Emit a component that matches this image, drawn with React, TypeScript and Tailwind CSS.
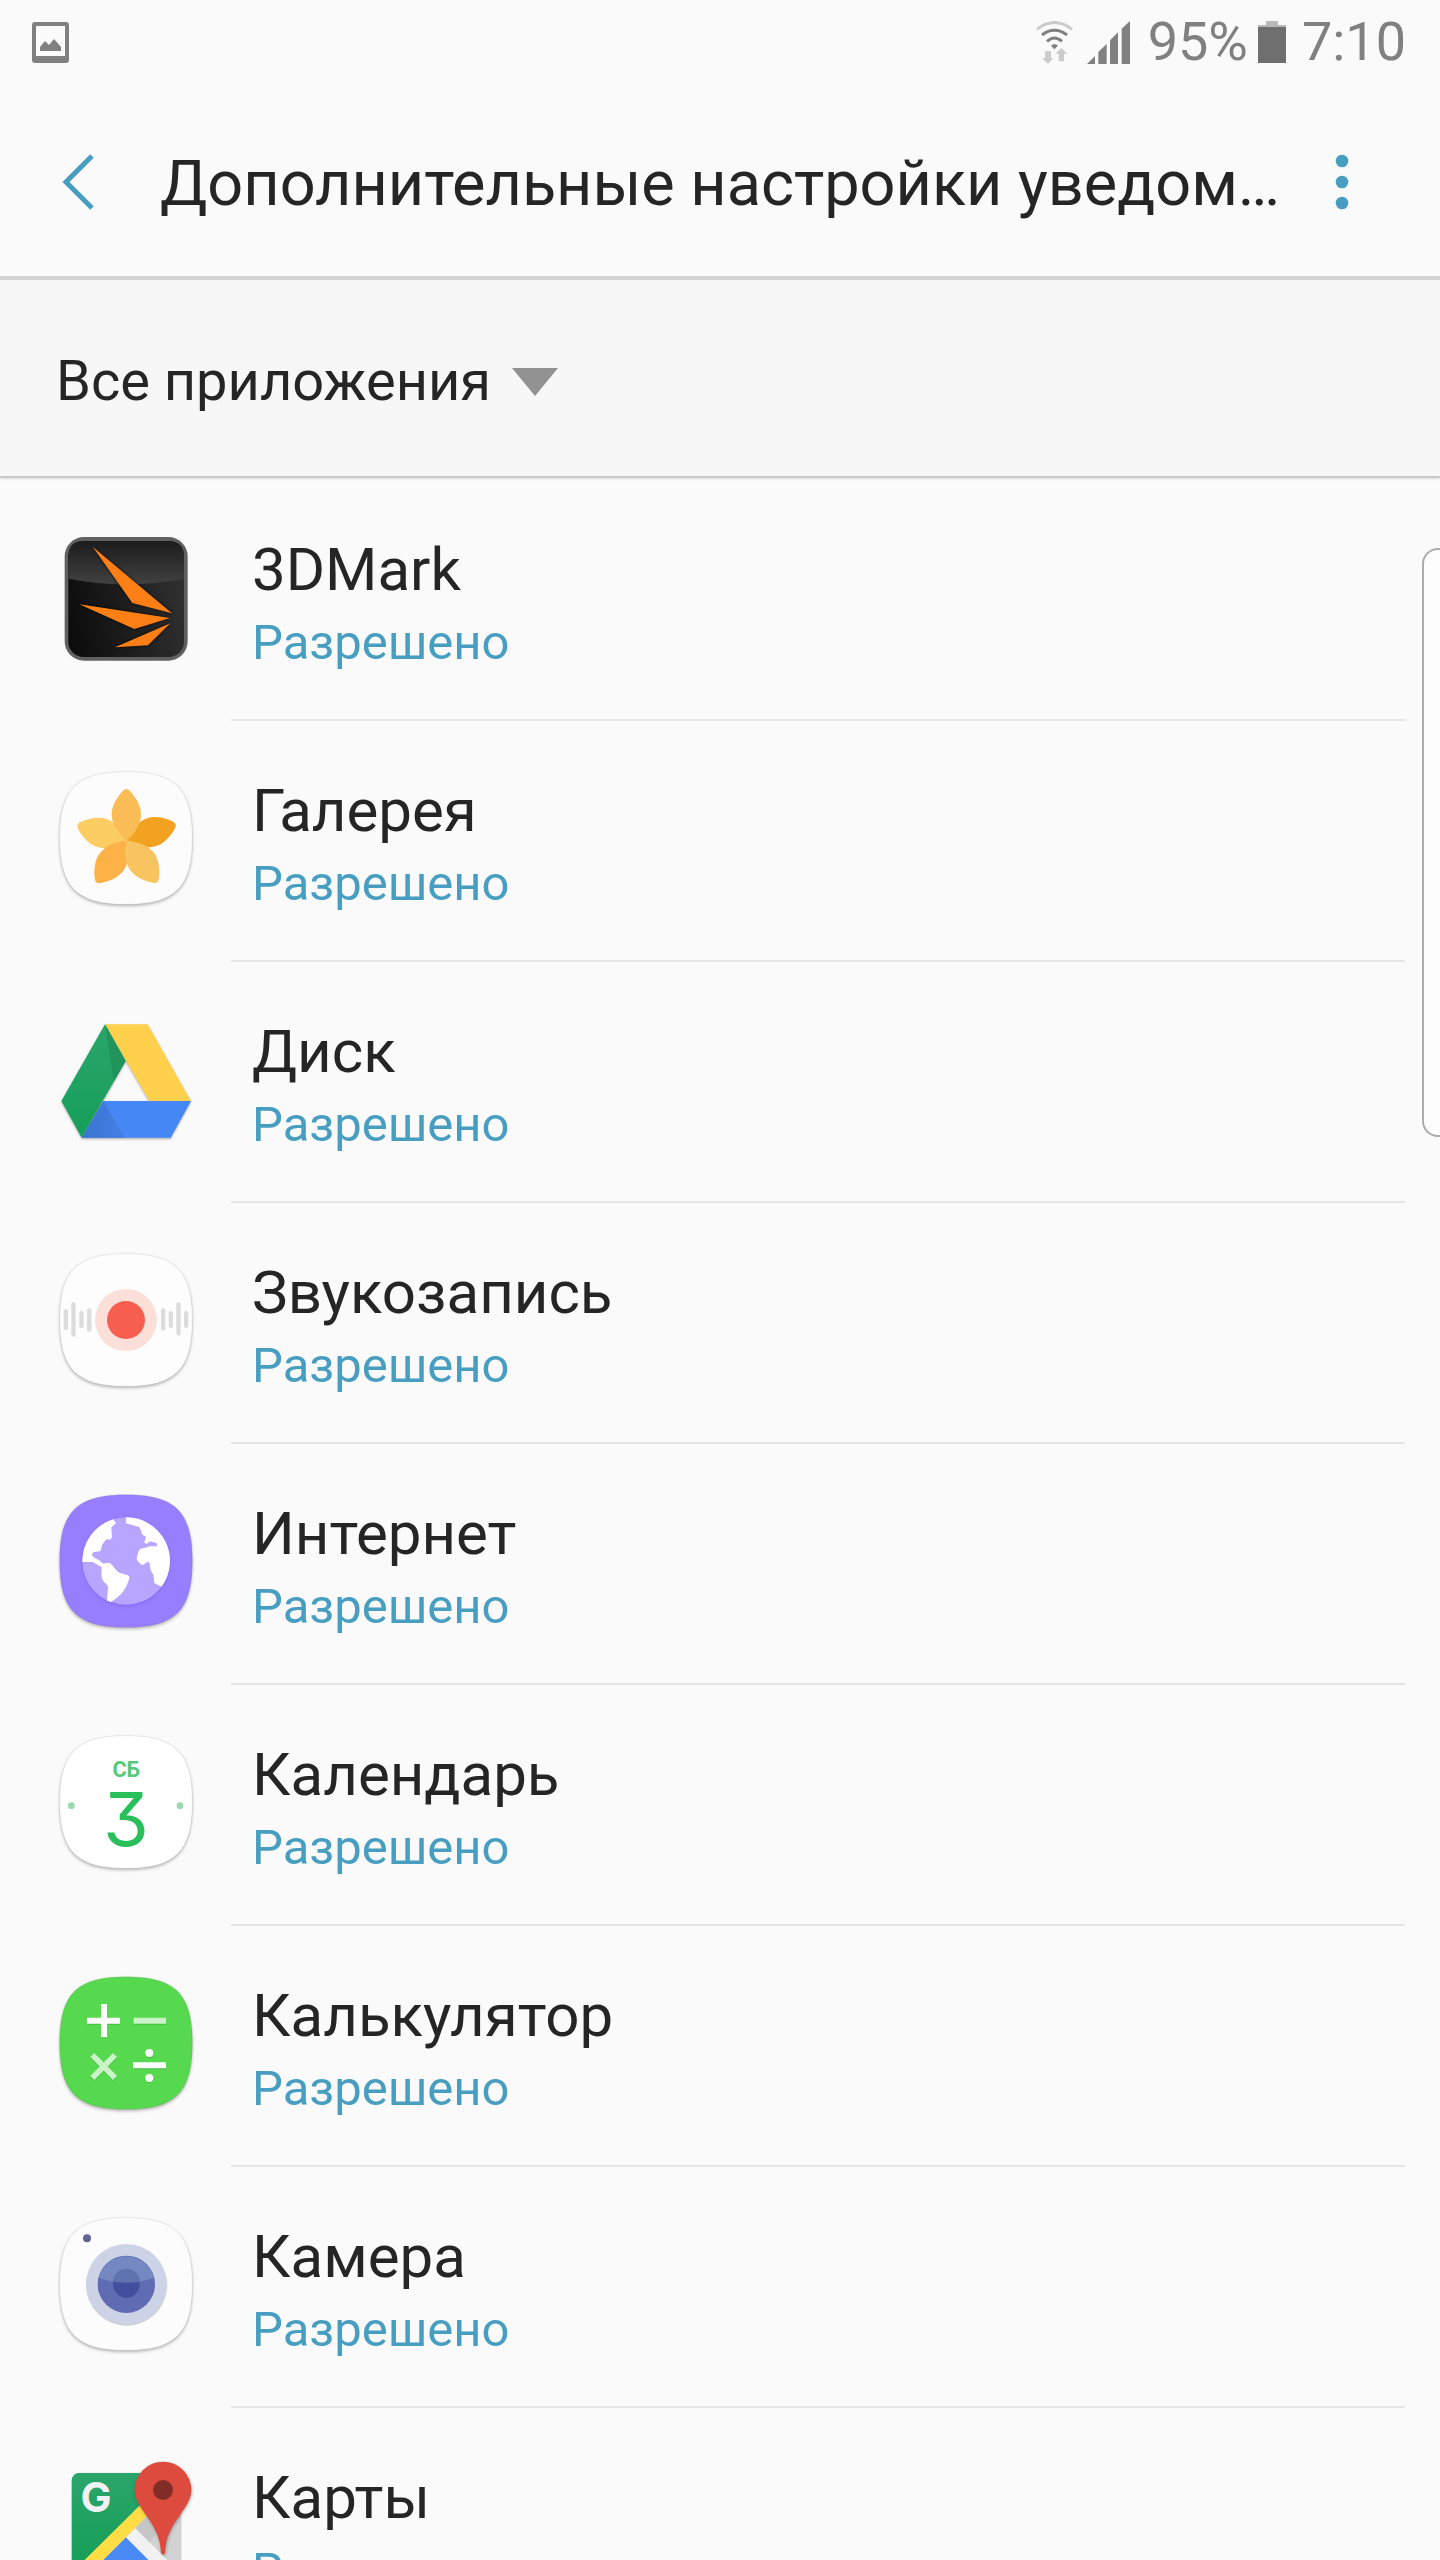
import type { ReactNode } from "react";

// Samsung-style rounded icon plate, centred on 0,0
const PLATE =
  "M-199 0C-199 -148 -148 -199 0 -199S199 -148 199 0S148 199 0 199S-199 148 -199 0Z";

function Plate({ y, fill, children }: { y: number; fill: string; children: ReactNode }) {
  return (
    <>
      <path
        d={PLATE}
        transform={`translate(258 ${y})`}
        fill={fill}
        stroke="#000"
        strokeOpacity="0.1"
        strokeWidth="2"
        className="[filter:drop-shadow(0_5px_4px_rgba(0,0,0,0.28))]"
      />
      {children}
    </>
  );
}

function AppIcon({ top, children }: { top: number; children: ReactNode }) {
  return (
    <svg
      viewBox={`0 ${top} 510 510`}
      className="size-[170px] shrink-0"
      aria-hidden="true"
    >
      {children}
    </svg>
  );
}

function BenchmarkIcon() {
  return (
    <AppIcon top={-18}>
      <defs>
        <linearGradient id="bm-base" x1="0" x2="1" y1="0.6" y2="0.4">
          <stop offset="0" stopColor="#0d0d0d" />
          <stop offset="1" stopColor="#303030" />
        </linearGradient>
        <linearGradient id="bm-gloss" x1="0" x2="0" y1="0" y2="1">
          <stop offset="0" stopColor="#1c1c1c" />
          <stop offset="1" stopColor="#414141" />
        </linearGradient>
      </defs>
      <rect x="74" y="51" width="369" height="371" rx="58" fill="#606060" />
      <rect x="85" y="63" width="347" height="348" rx="46" fill="url(#bm-base)" />
      <path
        d="M85 176V109Q85 63 131 63H386Q432 63 432 109V176Q258 210 85 176Z"
        fill="url(#bm-gloss)"
      />
      <g
        fill="#ff7f17"
        className="[filter:drop-shadow(0_0_4px_rgba(0,0,0,0.9))]"
      >
        <path d="M158 80L396 280L277 249Z" />
        <path d="M118 253L390 294L283 327Z" />
        <path d="M391 310L324 376L225 382Z" />
      </g>
    </AppIcon>
  );
}

function GalleryIcon() {
  const petals = [
    { angle: 72, color: "#f2a120" },
    { angle: 288, color: "#fccd62" },
    { angle: 0, color: "#fabc55" },
    { angle: 216, color: "#fcb246" },
    { angle: 144, color: "#f8c460" },
  ];
  return (
    <AppIcon top={15}>
      <Plate y={264} fill="#fcfcfc">
        {petals.map((p) => (
          <path
            key={p.angle}
            d="M260 272C230 246 215 220 215 192C215 160 243 126 253 119Q259 115 265 119C275 126 303 160 303 192C303 220 290 246 260 272Z"
            transform={`rotate(${p.angle} 260 272)`}
            fill={p.color}
          />
        ))}
      </Plate>
    </AppIcon>
  );
}

function DriveIcon() {
  return (
    <AppIcon top={-12}>
      <defs>
        <linearGradient id="dr-green" x1="0" x2="0" y1="0" y2="1">
          <stop offset="0" stopColor="#2ba56b" />
          <stop offset="1" stopColor="#159f5a" />
        </linearGradient>
        <linearGradient id="dr-blue" x1="0" x2="1" y1="0" y2="0">
          <stop offset="0" stopColor="#3b74d0" />
          <stop offset="1" stopColor="#4480e4" />
        </linearGradient>
      </defs>
      <g className="[filter:drop-shadow(0_4px_3px_rgba(0,0,0,0.3))]">
        <path d="M195 73H323L453 303H328Z" fill="#ffd04c" />
        <path d="M190 303H453L392 413H125Z" fill="#4587f4" />
        <path d="M195 73L257 183L125 413L64 303Z" fill="url(#dr-green)" />
      </g>
      <path d="M195 73L257 183L222 244Z" fill="#1f8f57" opacity="0.7" />
      <path d="M190 303L255 413H125Z" fill="url(#dr-blue)" />
    </AppIcon>
  );
}

function RecorderIcon() {
  const bars = [
    [71, 208, 62],
    [94, 187, 103],
    [118, 213, 51],
    [141, 205, 70],
    [363, 205, 67],
    [386, 213, 51],
    [409, 187, 100],
    [432, 213, 51],
  ];
  return (
    <AppIcon top={-9}>
      <Plate y={240} fill="#fdfdfd">
        {bars.map(([x, y, h]) => (
          <rect key={x} x={x} y={y} width="13" height={h} rx="6" fill="#dcdcdc" />
        ))}
        <circle cx="258" cy="240" r="93" fill="#fcdfd9" />
        <circle cx="258" cy="240" r="57" fill="#f65f50" />
      </Plate>
    </AppIcon>
  );
}

function InternetIcon() {
  return (
    <AppIcon top={-6}>
      <Plate y={243} fill="#977eff">
        <circle
          cx="258"
          cy="243"
          r="131"
          fill="#b8a5ff"
          className="[filter:drop-shadow(0_4px_4px_rgba(80,50,180,0.25))]"
        />
        <path
          d="M220 118L228 130L214 142L216 172Q213 182 203 178Q197 178 194 184Q185 194 184 204L181 214L161 216L155 224L163 233L178 241Q186 252 194 250L207 248Q216 252 221 261Q232 276 240 279L264 286Q270 290 267 299Q260 320 250 334Q238 350 213 366L201 362L204 320Q203 314 192 306Q185 298 184 284L185 262L158 246H127A131 131 0 0 1 220 118Z"
          fill="#fff"
        />
        <path
          d="M258 112A131 131 0 0 1 365 320L343 309L340 284Q330 272 329 250Q324 242 317 250L307 256Q290 244 290 234L296 213Q300 204 312 204L330 199H352Q352 186 340 187L330 184L319 192L312 186Q320 174 316 168Q305 166 303 152L298 141L258 130Z"
          fill="#fff"
        />
      </Plate>
    </AppIcon>
  );
}

function CalendarIcon() {
  return (
    <AppIcon top={-3}>
      <Plate y={246} fill="#fff">
        <text
          x="259"
          y="171"
          textAnchor="middle"
          fill="#55c97c"
          className="font-[Roboto] text-[65px] font-bold"
        >
          СБ
        </text>
        <text
          x="258"
          y="377"
          textAnchor="middle"
          fill="#29bf5b"
          className="font-[Inter] text-[222px] [font-feature-settings:'cv09']"
        >
          3
        </text>
        <circle cx="94" cy="257" r="10" fill="#98dab0" />
        <circle cx="420" cy="257" r="10" fill="#98dab0" />
      </Plate>
    </AppIcon>
  );
}

function CalculatorIcon() {
  return (
    <AppIcon top={0}>
      <Plate y={249} fill="#56d84f">
        <g className="[filter:drop-shadow(0_3px_2px_rgba(0,90,0,0.2))]">
          <path d="M183 132H201V173H240V191H201V232H183V191H141V173H183Z" fill="#fff" />
          <path d="M281 173H378V191H281Z" fill="#caf3c8" />
          <path d="M157 285L225 354M225 285L157 354" stroke="#caf3c8" strokeWidth="17" />
          <path d="M279 307H378V325H279Z" fill="#fff" />
          <circle cx="328" cy="279" r="12" fill="#fff" />
          <circle cx="328" cy="354" r="12" fill="#fff" />
        </g>
      </Plate>
    </AppIcon>
  );
}

function CameraIcon() {
  return (
    <AppIcon top={3}>
      <Plate y={252} fill="#fcfcfc">
        <circle cx="141" cy="115" r="12" fill="#5f6593" />
        <circle
          cx="259"
          cy="253"
          r="121"
          fill="#cdd3e7"
          className="[filter:drop-shadow(1px_3px_2px_rgba(0,0,0,0.2))]"
        />
        <circle cx="259" cy="253" r="86" fill="#5f6cb3" />
        <path d="M176 233A86 86 0 0 1 342 233Q259 263 176 233Z" fill="#7488c1" />
        <circle cx="259" cy="253" r="40" fill="#434f9e" />
        <path d="M219 246A40 40 0 0 1 299 246Q259 250 219 246Z" fill="#5d72af" />
      </Plate>
    </AppIcon>
  );
}

function MapsIcon() {
  return (
    <AppIcon top={156}>
      <defs>
        <clipPath id="map-sheet">
          <rect x="95" y="248" width="330" height="330" rx="24" />
        </clipPath>
        <linearGradient id="map-green" x1="0" x2="0" y1="0" y2="1">
          <stop offset="0" stopColor="#2ba56b" />
          <stop offset="0.8" stopColor="#169f58" />
        </linearGradient>
      </defs>
      <g clipPath="url(#map-sheet)">
        <path d="M95 248H425V578H95Z" fill="#d2d2d2" />
        <path d="M95 248H398L68 578Z" fill="url(#map-green)" />
        <path d="M258 442L394 578H122Z" fill="#4a8af4" />
        <path d="M258 442L286 414L450 578H394Z" fill="#f1f1f1" />
        <path d="M298 348L398 248V301L121 578H65Z" fill="#ffdd45" />
        <path d="M398 301L286 414L330 458L425 300Z" fill="#c6c6c6" />
      </g>
      <text
        x="168"
        y="367"
        textAnchor="middle"
        fill="#f1f1f1"
        className="font-[Inter] text-[124px] font-bold"
      >
        G
      </text>
      <path
        d="M369 215A85 85 0 0 1 454 300C454 358 378 396 375 488Q369 500 363 488C360 396 284 358 284 300A85 85 0 0 1 369 215Z"
        fill="#dc4b3e"
        className="[filter:drop-shadow(2px_3px_4px_rgba(0,0,0,0.3))]"
      />
      <circle cx="369" cy="300" r="30" fill="#822b27" />
    </AppIcon>
  );
}

const APPS = [
  { name: "3DMark", icon: <BenchmarkIcon /> },
  { name: "Галерея", icon: <GalleryIcon /> },
  { name: "Диск", icon: <DriveIcon /> },
  { name: "Звукозапись", icon: <RecorderIcon /> },
  { name: "Интернет", icon: <InternetIcon /> },
  { name: "Календарь", icon: <CalendarIcon /> },
  { name: "Калькулятор", icon: <CalculatorIcon /> },
  { name: "Камера", icon: <CameraIcon /> },
  { name: "Карты", icon: <MapsIcon /> },
];

function StatusBar() {
  return (
    <div className="flex h-[84px] shrink-0 items-center justify-between pr-[34px] pl-8 text-[54px] leading-[66px] text-[#808080]">
      {/* Screenshot saved */}
      <svg viewBox="0 0 37 41" className="h-[41px] w-[37px]" aria-hidden="true">
        <path
          fillRule="evenodd"
          d="M3 0H34Q37 0 37 3V38Q37 41 34 41H3Q0 41 0 38V3Q0 0 3 0ZM4 4V34H33V4Z"
          fill="#808080"
        />
        <path d="M8 29V25L13 19L17 23L22 17L29 25V29Z" fill="#808080" />
      </svg>

      <div className="flex items-center">
        {/* Wi-Fi with traffic arrows */}
        <svg viewBox="0 0 111 129" className="h-[43px] w-[37px]" aria-hidden="true">
          <g fill="none" strokeWidth="9">
            <path d="M3 25Q55 -16 108 25" stroke="#cbcbcb" />
            <path d="M18 42Q55 14 93 42" stroke="#808080" />
            <path d="M33 61Q55 41 78 61" stroke="#808080" />
          </g>
          <path d="M45 74Q55 66 66 74L55 85Z" fill="#808080" />
          <path d="M27 91H45V111H52L36 129L18 111H27Z" fill="#cbcbcb" />
          <path d="M68 121H84V98H94L76 81L58 98H68Z" fill="#cbcbcb" />
        </svg>
        <svg viewBox="0 0 129 129" className="ml-[14px] size-[43px]" aria-hidden="true">
          <g fill="#808080">
            <path d="M0 129L24 105V129Z" />
            <path d="M34 129V93L59 69V129Z" />
            <path d="M69 129V58L93 34V129Z" />
            <path d="M104 129V23L129 0V129Z" />
          </g>
        </svg>
        <span className="ml-[18px]">95%</span>
        <svg viewBox="0 0 28 42" className="ml-[10px] h-[42px] w-7" aria-hidden="true">
          <path d="M8 0H20V4H28V6H0V4H8Z" fill="#b8b8b8" />
          <path d="M0 6H28V42H0Z" fill="#6f6f6f" />
        </svg>
        <span className="ml-4">7:10</span>
      </div>
    </div>
  );
}

export default function App() {
  return (
    <div className="relative flex h-screen flex-col overflow-hidden bg-[#fafafa] font-[Roboto,sans-serif] text-[#252525]">
      <StatusBar />

      <header className="flex h-[196px] shrink-0 items-center border-b-4 border-[#d3d3d3] pt-1 pr-[72px] pl-[62px]">
        <button type="button" aria-label="Назад" className="shrink-0">
          <svg viewBox="0 0 32 56" className="h-14 w-8">
            <path d="M30 2L4 28L30 54" fill="none" stroke="#489ec0" strokeWidth="5" />
          </svg>
        </button>
        <h1 className="ml-[66px] min-w-0 flex-1 truncate pt-1 text-[63px] leading-[76px]">
          Дополнительные настройки уведом…
        </h1>
        <button type="button" aria-label="Ещё" className="flex w-[52px] shrink-0 justify-center">
          <svg viewBox="0 0 14 56" className="h-14 w-[14px]" fill="#489ec0">
            <circle cx="7" cy="7" r="6.3" />
            <circle cx="7" cy="28" r="6.3" />
            <circle cx="7" cy="49" r="6.3" />
          </svg>
        </button>
      </header>

      <div className="z-10 flex h-[198px] shrink-0 items-center border-b-2 border-[#c9c9c9] bg-[#f7f7f7] px-14 pt-2 shadow-[0_1px_2px_rgba(0,0,0,0.12)]">
        <select
          aria-label="Фильтр"
          className="appearance-none bg-transparent pb-[2px] text-[56px] leading-[66px] focus:outline-none"
        >
          <option>Все приложения</option>
        </select>
        <svg viewBox="0 0 46 28" className="ml-5 h-7 w-[46px]" aria-hidden="true">
          <path d="M0 0H46L23 28Z" fill="#929292" />
        </svg>
      </div>

      <ul className="min-h-0 flex-1 overflow-hidden pt-[2px]">
        {APPS.map((app) => (
          <li key={app.name}>
            <button type="button" className="flex w-full pr-[35px] pl-10 text-left">
              <span className="flex h-[237px] items-center">{app.icon}</span>
              <span className="ml-[21px] block flex-1 border-b-2 border-[#e5e5e5] pt-[51px] pb-[42px] pl-[21px]">
                <span className="block text-[60px] leading-[78px]">{app.name}</span>
                <span className="block text-[49px] leading-[68px] text-[#489ec0]">
                  Разрешено
                </span>
              </span>
            </button>
          </li>
        ))}
      </ul>

      {/* Edge panel handle */}
      <div className="absolute top-[548px] right-0 h-[589px] w-[18px] rounded-l-2xl border-2 border-r-0 border-[#ababab] bg-[#fdfdfd]" />
    </div>
  );
}
